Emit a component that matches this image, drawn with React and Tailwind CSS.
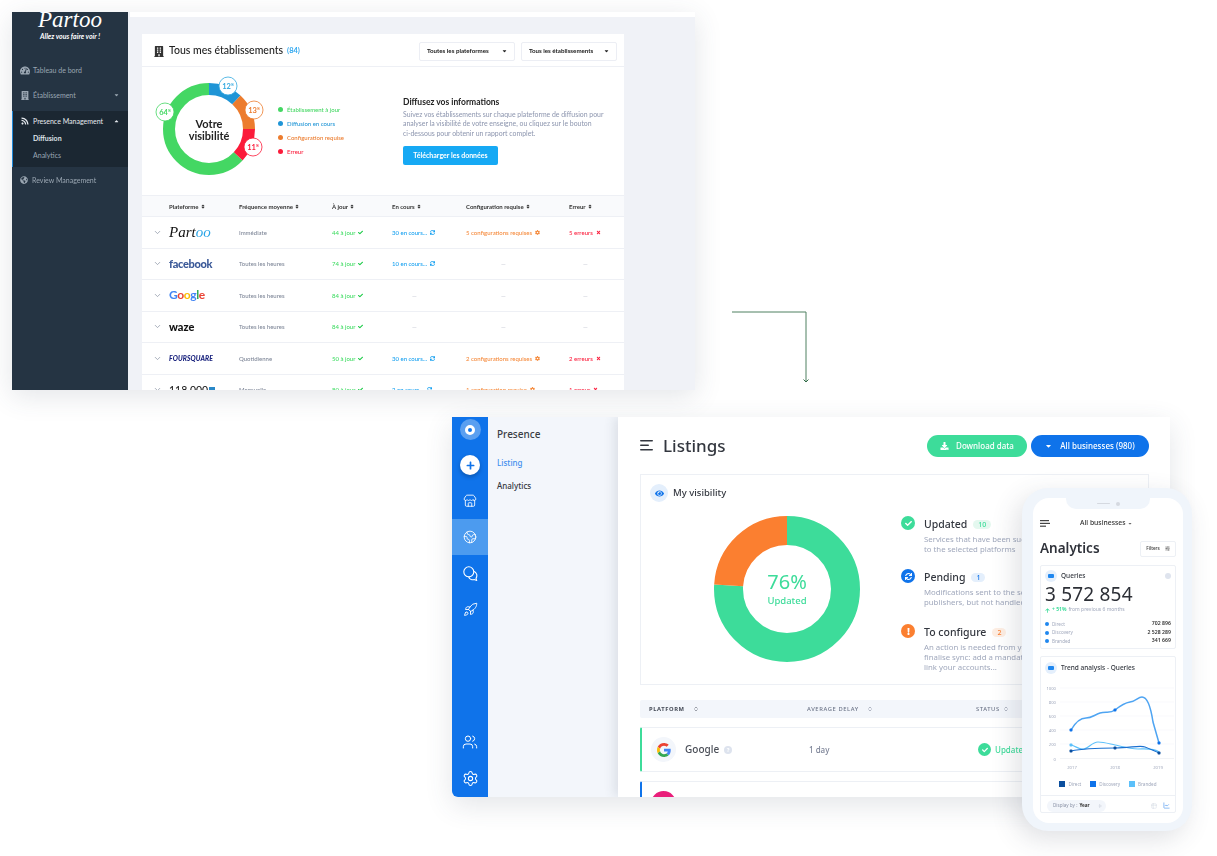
import React from "react";
import {
  FaTachometerAlt,
  FaBuilding,
  FaRss,
  FaGlobeAmericas,
  FaCaretDown,
  FaCaretUp,
  FaSort,
  FaCheck,
  FaSync,
  FaTimes,
  FaCog,
  FaEye,
  FaDownload,
  FaPlus,
  FaExclamation,
  FaQuestion,
  FaArrowUp,
} from "react-icons/fa";
import { ChevronDown, Store, Earth, Rocket, Users, Settings, ChevronsUpDown, LineChart, Table2, SlidersHorizontal } from "lucide-react";

const rows = [
  { logo: "partoo", freq: "Immédiate", ok: "44 à jour", pending: "30 en cours...", conf: "5 configurations requises", err: "5 erreurs" },
  { logo: "facebook", freq: "Toutes les heures", ok: "74 à jour", pending: "10 en cours..." },
  { logo: "google", freq: "Toutes les heures", ok: "84 à jour" },
  { logo: "waze", freq: "Toutes les heures", ok: "84 à jour" },
  { logo: "foursquare", freq: "Quotidienne", ok: "50 à jour", pending: "30 en cours...", conf: "2 configurations requises", err: "2 erreurs" },
  { logo: "118", freq: "Mensuelle", ok: "80 à jour", pending: "2 en cours...", conf: "1 configuration requise", err: "1 erreur" },
];

const Ring = ({ r, width, color, start, size }) => (
  <circle
    r={r}
    fill="none"
    stroke={color}
    strokeWidth={width}
    pathLength="100"
    strokeDasharray={`${size} ${100 - size}`}
    strokeDashoffset={-start}
    transform="rotate(-90)"
  />
);

const Badge = ({ x, y, color, label }) => (
  <g transform={`translate(${x} ${y})`}>
    <circle r="9" fill="#fff" stroke={color} strokeWidth="0.8" />
    <text textAnchor="middle" y="2.5" fontSize="7.5" fontWeight="700" fill={color}>
      {label}
      <tspan fontSize="3.5" dy="-2.5">%</tspan>
    </text>
  </g>
);

const Logo = ({ name }) => {
  if (name === "partoo")
    return (
      <span className="font-['Liberation_Serif',serif] italic text-[15px] leading-none text-[#111]">
        Part<span className="text-[#2aa5e8]">oo</span>
      </span>
    );
  if (name === "facebook") return <span className="text-[11px] font-black tracking-[-0.3px] text-[#3b5998]">facebook</span>;
  if (name === "google")
    return (
      <span className="text-[12px] font-bold tracking-[-0.4px]">
        <span className="text-[#4285f4]">G</span>
        <span className="text-[#ea4335]">o</span>
        <span className="text-[#fbbc05]">o</span>
        <span className="text-[#4285f4]">g</span>
        <span className="text-[#34a853]">l</span>
        <span className="text-[#ea4335]">e</span>
      </span>
    );
  if (name === "waze") return <span className="text-[11px] font-black text-[#111]">waze</span>;
  if (name === "foursquare") return <span className="text-[6.8px] font-black italic tracking-[0.1px] text-[#1a237e]">FOURSQUARE</span>;
  return (
    <span className="flex items-center text-[10.5px] leading-none text-[#222]">
      118 000
      <span className="ml-px h-[6px] w-[6px] bg-[#2a88c8]"></span>
    </span>
  );
};

function TopWindow() {
  return (
    <div className="absolute left-[12px] top-[12px] flex h-[378px] w-[683px] overflow-hidden bg-[#f0f2f7] font-['Lato',sans-serif] shadow-[0_6px_26px_rgba(60,70,90,0.14)] blur-[0.5px]">
      <aside className="flex w-[116px] shrink-0 flex-col bg-[#253443] text-[7px] text-[#9aa6b2]">
        <div className="h-[29px] text-center">
          <div className="-mt-[4px] font-['Liberation_Serif',serif] text-[23px] italic leading-[24px] text-white">Partoo</div>
          <div className="text-[7px] font-bold italic leading-[8px] text-white">Allez vous faire voir !</div>
        </div>
        <div className="mt-[23px] flex h-[12px] items-center gap-[3px] pl-[8px]">
          <FaTachometerAlt className="h-[9px] w-[10px]" />
          Tableau de bord
        </div>
        <div className="mt-[13px] flex h-[12px] items-center gap-[4px] pl-[9px] pr-[9px]">
          <FaBuilding className="h-[9px] w-[8px]" />
          Établissement
          <FaCaretDown className="ml-auto h-[6px] w-[5px]" />
        </div>
        <div className="mt-[10px] flex h-[56px] flex-col border-l border-[#1e88d8] bg-[#1b2732] pt-[4px]">
          <div className="flex h-[12px] items-center gap-[4px] pl-[8px] pr-[9px] text-[#e6eaef]">
            <FaRss className="h-[8px] w-[8px]" />
            Presence Management
            <FaCaretUp className="ml-auto h-[6px] w-[5px]" />
          </div>
          <div className="mt-[5px] h-[12px] pl-[20px] font-bold leading-[12px] text-[#dfe4e9]">Diffusion</div>
          <div className="mt-[5px] h-[12px] pl-[20px] leading-[12px]">Analytics</div>
        </div>
        <div className="mt-[7px] flex h-[12px] items-center gap-[4px] pl-[8px]">
          <FaGlobeAmericas className="h-[8px] w-[8px]" />
          Review Management
        </div>
      </aside>

      <div className="ml-[2px] flex min-w-0 flex-1 flex-col">
        <div className="h-[5px] shrink-0 bg-white"></div>
        <section className="ml-[12px] mt-[17px] w-[482px] bg-white">
          <header className="flex h-[33px] items-center border-b border-[#eef0f5] pl-[12px] pr-[7px] pt-[2px]">
            <FaBuilding className="h-[11px] w-[10px] text-[#333]" />
            <span className="ml-[5px] text-[10.5px] font-medium text-[#222]">Tous mes établissements</span>
            <span className="ml-[4px] text-[7.5px] font-bold text-[#33a9f0]">(84)</span>
            <button className="ml-auto flex h-[19px] w-[96px] items-center justify-between rounded-[2px] border border-[#eceef4] pl-[7px] pr-[7px] text-[6.2px] font-bold text-[#222]">
              Toutes les plateformes
              <FaCaretDown className="h-[6px] w-[5px]" />
            </button>
            <button className="ml-[6px] flex h-[19px] w-[96px] items-center justify-between rounded-[2px] border border-[#eceef4] pl-[7px] pr-[7px] text-[6.2px] font-bold text-[#222]">
              Tous les établissements
              <FaCaretDown className="h-[6px] w-[5px]" />
            </button>
          </header>

          <div className="flex h-[127px] pl-[6px]">
            <svg className="shrink-0 font-['Lato',sans-serif]" width="130" height="127" viewBox="0 0 130 127">
              <g transform="translate(61 62)">
                <Ring r="40" width="12" color="#1f95d6" start={0} size={12} />
                <Ring r="40" width="12" color="#ec7c2e" start={12} size={13} />
                <Ring r="40" width="12" color="#fb1b3a" start={25} size={12} />
                <Ring r="40" width="12" color="#44d763" start={37} size={63} />
                <text textAnchor="middle" y="-1" fontSize="11" fontWeight="700" fill="#222">Votre</text>
                <text textAnchor="middle" y="11" fontSize="11" fontWeight="700" fill="#222">visibilité</text>
              </g>
              <Badge x="17" y="45" color="#44d763" label="64" />
              <Badge x="80" y="19" color="#33a9e0" label="12" />
              <Badge x="106" y="43" color="#ec7c2e" label="13" />
              <Badge x="105" y="80" color="#fb1b3a" label="11" />
            </svg>
            <div className="w-[125px] pt-[35px] text-[6px] font-medium">
              <div className="flex h-[14px] items-center gap-[4px] text-[#44d763]"><i className="h-[5px] w-[5px] rounded-full bg-[#44d763]"></i>Établissement à jour</div>
              <div className="flex h-[14px] items-center gap-[4px] text-[#1f95d6]"><i className="h-[5px] w-[5px] rounded-full bg-[#1f95d6]"></i>Diffusion en cours</div>
              <div className="flex h-[14px] items-center gap-[4px] text-[#ec7c2e]"><i className="h-[5px] w-[5px] rounded-full bg-[#ec7c2e]"></i>Configuration requise</div>
              <div className="flex h-[15px] items-center gap-[4px] text-[#fb1b3a]"><i className="h-[5px] w-[5px] rounded-full bg-[#fb1b3a]"></i>Erreur</div>
            </div>
            <div className="pt-[29px]">
              <h3 className="text-[8.5px] font-bold leading-[12px] text-[#222]">Diffusez vos informations</h3>
              <p className="mt-[2px] whitespace-nowrap text-[6.9px] leading-[9.4px] text-[#8c95ae]">
                Suivez vos établissements sur chaque plateforme de diffusion pour
                <br />
                analyser la visibilité de votre enseigne, ou cliquez sur le bouton
                <br />
                ci-dessous pour obtenir un rapport complet.
              </p>
              <button className="mt-[8px] flex h-[19px] w-[95px] items-center justify-center rounded-[2px] bg-[#16a9f4] text-[7px] font-bold text-white">
                Télécharger les données
              </button>
            </div>
          </div>

          <div className="mt-px grid h-[22px] grid-cols-[27px_70px_93px_60px_74px_103px_55px] items-center border-y border-[#eef0f5] bg-[#f9fafc] text-[6px] font-bold text-[#333]">
            <span></span>
            {["Plateforme", "Fréquence moyenne", "À jour", "En cours", "Configuration requise", "Erreur"].map((h) => (
              <span key={h} className="flex items-center gap-[2px]">
                {h}
                <FaSort className="h-[5px] w-[4px]" />
              </span>
            ))}
          </div>

          {rows.map((r) => (
            <div key={r.logo} className="grid h-[31.5px] grid-cols-[27px_70px_93px_60px_74px_103px_55px] items-center border-b border-[#eef0f5] text-[6px] font-medium">
              <ChevronDown className="ml-[11px] h-[9px] w-[9px] text-[#8c95a6]" />
              <span className="flex items-center"><Logo name={r.logo} /></span>
              <span className="text-[#7f8798]">{r.freq}</span>
              <span className="flex items-center gap-[3px] text-[#3fdc62]">
                {r.ok}
                <FaCheck className="h-[5px] w-[5px] text-[#14c941]" />
              </span>
              {r.pending ? (
                <span className="flex items-center gap-[3px] text-[#16a0f0]">
                  {r.pending}
                  <FaSync className="h-[5px] w-[5px]" />
                </span>
              ) : (
                <span className="pl-[20px] text-[#c6cad3]">—</span>
              )}
              {r.conf ? (
                <span className="flex items-center gap-[3px] whitespace-nowrap text-[#f58a3c]">
                  {r.conf}
                  <FaCog className="h-[5px] w-[5px]" />
                </span>
              ) : (
                <span className="pl-[35px] text-[#c6cad3]">—</span>
              )}
              {r.err ? (
                <span className="flex items-center gap-[3px] whitespace-nowrap text-[#fb1b3a]">
                  {r.err}
                  <FaTimes className="h-[5px] w-[5px]" />
                </span>
              ) : (
                <span className="pl-[14px] text-[#c6cad3]">—</span>
              )}
            </div>
          ))}
        </section>
      </div>
    </div>
  );
}

const StatusItem = ({ icon, bg, title, count, badge, lines, className }) => (
  <div className={`flex gap-[9px] ${className}`}>
    <span className={`mt-[-1px] flex h-[14px] w-[14px] shrink-0 items-center justify-center rounded-full text-white ${bg}`}>{icon}</span>
    <div>
      <div className="flex h-[14px] items-center text-[10.5px] font-medium leading-none text-[#33373f]">
        {title}
        <span className={`ml-[6px] rounded-full px-[5px] py-px text-[7px] ${badge}`}>{count}</span>
      </div>
      <div className="mt-[3px] w-[200px] text-[7.8px] leading-[10px] text-[#a0a8bc]">
        {lines.map((l) => (
          <div key={l}>{l}</div>
        ))}
      </div>
    </div>
  </div>
);

function BottomWindow() {
  return (
    <div className="absolute left-[452px] top-[417px] flex h-[380px] w-[718px] overflow-hidden rounded-bl-[6px] bg-white font-['Noto_Sans',sans-serif] shadow-[0_8px_28px_rgba(60,70,90,0.14)] blur-[0.5px]">
      <nav className="flex w-[36px] shrink-0 flex-col items-center bg-[#0f73ea] text-white">
        <span className="mt-[2px] flex h-[21px] w-[21px] items-center justify-center rounded-full bg-[#5a9ff0]">
          <span className="h-[10px] w-[10px] rounded-full border-[3px] border-white bg-[#0f73ea]"></span>
        </span>
        <span className="mt-[15px] flex h-[20px] w-[20px] items-center justify-center rounded-full bg-white text-[#0f73ea] shadow-[0_2px_4px_rgba(0,0,0,0.25)]">
          <FaPlus className="h-[9px] w-[9px]" />
        </span>
        <Store className="mt-[19px] h-[14px] w-[14px]" strokeWidth={1.5} />
        <span className="mt-[11px] flex h-[36px] w-full items-center justify-center bg-[#4c9bef]">
          <Earth className="h-[14px] w-[14px]" strokeWidth={1.5} />
        </span>
        <svg className="mt-[11px] h-[15px] w-[15px]" viewBox="0 0 15 15" fill="none" stroke="currentColor" strokeWidth="1.1">
          <circle cx="5.8" cy="5.8" r="5" />
          <path d="M10.7 5.2A4.6 4.6 0 0 1 13 12.2L13.6 14.4L11.2 13.6A4.6 4.6 0 0 1 5.6 10.8" />
        </svg>
        <Rocket className="mt-[21px] h-[15px] w-[15px]" strokeWidth={1.5} />
        <Users className="mt-auto h-[16px] w-[16px]" strokeWidth={1.5} />
        <Settings className="mb-[10px] mt-[20px] h-[17px] w-[17px]" strokeWidth={1.5} />
      </nav>

      <div className="w-[130px] shrink-0 bg-[#f3f6fb] pl-[9px] pt-[10px]">
        <div className="text-[10px] font-medium leading-[14px] text-[#3a3d44]">Presence</div>
        <div className="mt-[16px] text-[8px] font-medium leading-[12px] text-[#3f8fee]">Listing</div>
        <div className="mt-[11px] text-[8px] font-medium leading-[12px] text-[#33373f]">Analytics</div>
      </div>

      <main className="min-w-0 flex-1 pl-[22px] pr-[21px] shadow-[-4px_0_10px_rgba(60,70,90,0.12)]">
        <div className="flex h-[57px] items-center">
          <svg className="h-[11px] w-[14px] text-[#33373f]" viewBox="0 0 14 11" fill="currentColor">
            <rect width="13" height="1.6" rx="0.8" />
            <rect y="4.5" width="9" height="1.6" rx="0.8" />
            <rect y="9" width="13" height="1.6" rx="0.8" />
          </svg>
          <h1 className="ml-[9px] text-[17px] font-medium leading-none text-[#33373f]">Listings</h1>
          <button className="ml-auto flex h-[22px] w-[100px] items-center justify-center gap-[7px] rounded-full bg-[#3ddc9a] text-[8px] font-medium text-white">
            <FaDownload className="h-[8px] w-[9px]" />
            Download data
          </button>
          <button className="ml-[4px] flex h-[22px] w-[118px] items-center justify-center gap-[8px] rounded-full bg-[#0f73ea] text-[8px] font-medium text-white">
            <FaCaretDown className="h-[8px] w-[7px]" />
            All businesses (980)
          </button>
        </div>

        <section className="h-[211px] border border-[#edf0f5]">
          <div className="flex h-[36px] items-center gap-[5px] pl-[9px]">
            <span className="flex h-[18px] w-[18px] items-center justify-center rounded-full bg-[#e4effc]">
              <FaEye className="h-[9px] w-[9px] text-[#0f73ea]" />
            </span>
            <span className="text-[9.5px] font-medium text-[#33373f]">My visibility</span>
          </div>
          <div className="flex">
            <svg className="ml-[72px] mt-[4px] shrink-0 font-['Noto_Sans',sans-serif]" width="148" height="148" viewBox="0 0 148 148">
              <g transform="translate(74 74)">
                <Ring r="58.5" width="29" color="#3ddc9a" start={0} size={76} />
                <Ring r="58.5" width="29" color="#fb7f30" start={76} size={24} />
                <text textAnchor="middle" y="0" fontSize="20" fill="#3ddc9a">76%</text>
                <text textAnchor="middle" y="15" fontSize="9.5" fontWeight="500" fill="#3ddc9a">Updated</text>
              </g>
            </svg>
            <div className="ml-[40px] pt-[6px]">
              <StatusItem
                icon={<FaCheck className="h-[7px] w-[7px]" />}
                bg="bg-[#3ddc9a]"
                title="Updated"
                count="10"
                badge="bg-[#e4f8ef] text-[#3ddc9a]"
                lines={["Services that have been successfully", "to the selected platforms"]}
              />
              <StatusItem
                className="mt-[16px]"
                icon={<FaSync className="h-[7px] w-[7px]" />}
                bg="bg-[#0f73ea]"
                title="Pending"
                count="1"
                badge="bg-[#e4effc] text-[#0f73ea]"
                lines={["Modifications sent to the selected", "publishers, but not handled yet"]}
              />
              <StatusItem
                className="mt-[18px]"
                icon={<FaExclamation className="h-[7px] w-[7px]" />}
                bg="bg-[#fb7f30]"
                title="To configure"
                count="2"
                badge="bg-[#feeee3] text-[#fb7f30]"
                lines={["An action is needed from you to", "finalise sync: add a mandatory field,", "link your accounts..."]}
              />
            </div>
          </div>
        </section>

        <div className="mt-[15px] grid h-[18px] grid-cols-[158px_169px_1fr] items-center rounded-[2px] bg-[#f3f6fb] pl-[9px] text-[5.8px] font-medium tracking-[0.6px] text-[#6d7588]">
          <span className="flex items-center gap-[8px] font-bold text-[#444a56]">PLATFORM<ChevronsUpDown className="h-[6px] w-[6px]" /></span>
          <span className="flex items-center gap-[8px]">AVERAGE DELAY<ChevronsUpDown className="h-[6px] w-[6px]" /></span>
          <span className="flex items-center gap-[3px]">STATUS<ChevronsUpDown className="h-[6px] w-[6px]" /></span>
        </div>

        <div className="mt-[9px] grid h-[45px] grid-cols-[158px_169px_1fr] items-center rounded-[2px] border-y border-r border-l-[2px] border-y-[#edf0f5] border-r-[#edf0f5] border-l-[#3ddc9a] pl-[9px]">
          <span className="flex items-center">
            <span className="flex h-[25px] w-[25px] items-center justify-center rounded-full bg-[#f3f6fb]">
              <svg className="h-[14px] w-[14px]" viewBox="0 0 48 48">
                <path fill="#EA4335" d="M24 9.5c3.5 0 6.7 1.2 9.2 3.6l6.9-6.9C35.9 2.4 30.5 0 24 0 14.6 0 6.5 5.4 2.6 13.2l8 6.2C12.5 13.7 17.8 9.5 24 9.5z" />
                <path fill="#4285F4" d="M47 24.5c0-1.6-.1-3.1-.4-4.5H24v9h13c-.6 3-2.2 5.5-4.8 7.2l7.7 6C44.400 38.100 47 31.900 47 24.500z" />
                <path fill="#FBBC05" d="M10.500 28.600A14.500 14.500 0 0 1 9.700 24c0-1.600.3-3.100.8-4.600l-8-6.200A24 24 0 0 0 0 24c0 3.900.9 7.500 2.600 10.800l7.900-6.200z" />
                <path fill="#34A853" d="M24 48c6.500 0 11.900-2.100 15.900-5.800l-7.700-6c-2.200 1.500-4.900 2.300-8.200 2.300-6.200 0-11.500-4.200-13.400-9.900l-8 6.200C6.500 42.600 14.600 48 24 48z" />
              </svg>
            </span>
            <span className="ml-[9px] text-[10px] font-medium text-[#4b4f58]">Google</span>
            <span className="ml-[5px] flex h-[8px] w-[8px] items-center justify-center rounded-full bg-[#dde3ee] text-white">
              <FaQuestion className="h-[4px] w-[4px]" />
            </span>
          </span>
          <span className="text-[8px] font-medium text-[#7c8397]">1 day</span>
          <span className="flex items-center gap-[4px] text-[8px] font-medium text-[#3ddc9a]">
            <span className="flex h-[13px] w-[13px] items-center justify-center rounded-full bg-[#3ddc9a] text-white">
              <FaCheck className="h-[6px] w-[6px]" />
            </span>
            Updated
          </span>
        </div>

        <div className="mt-[9px] h-[45px] rounded-[2px] border-y border-r border-l-[2px] border-y-[#edf0f5] border-r-[#edf0f5] border-l-[#0f73ea] pl-[9px] pt-[9px]">
          <span className="block h-[25px] w-[25px] rounded-full bg-[#e91e7a]"></span>
        </div>
      </main>
    </div>
  );
}

function Phone() {
  return (
    <div className="absolute left-[1022px] top-[488px] h-[343px] w-[170px] rounded-[26px] bg-[#f0f5fb] pb-[8px] pl-[11px] pr-[9px] pt-[10px] font-['Noto_Sans',sans-serif] shadow-[-6px_8px_26px_rgba(60,70,90,0.16)] blur-[0.5px]">
      <div className="absolute left-[44px] top-[10px] flex h-[11px] w-[84px] items-center justify-center gap-[6px] rounded-b-[10px] bg-[#f0f5fb]">
        <span className="h-[1.5px] w-[13px] rounded-full bg-[#d5d9e0]"></span>
        <span className="h-[4px] w-[4px] rounded-full bg-[#d5d9e0]"></span>
      </div>
      <div className="h-full rounded-[16px] bg-white px-[7px] pt-[18px]">
        <div className="flex h-[14px] items-center">
          <svg className="h-[7px] w-[10px] text-[#444]" viewBox="0 0 10 7" fill="currentColor">
            <rect width="9" height="1.2" />
            <rect y="2.8" width="10" height="1.2" />
            <rect y="5.6" width="6" height="1.2" />
          </svg>
          <span className="ml-[30px] flex items-center gap-[3px] text-[6.8px] font-medium text-[#333]">
            All businesses
            <FaCaretDown className="h-[5px] w-[4px] text-[#666]" />
          </span>
        </div>
        <div className="mt-[10px] flex h-[17px] items-center justify-between">
          <span className="text-[13.5px] font-semibold text-[#2f323a]">Analytics</span>
          <span className="flex h-[16px] w-[36px] items-center justify-center gap-[5px] rounded-[2px] border border-[#edf0f5] text-[4.6px] font-medium text-[#333]">
            Filters
            <SlidersHorizontal className="h-[5px] w-[5px]" />
          </span>
        </div>

        <section className="mt-[8px] h-[84px] rounded-[2px] border border-[#edf0f5] px-[4px] pt-[4px]">
          <div className="flex h-[12px] items-center gap-[4px]">
            <span className="flex h-[12px] w-[12px] items-center justify-center rounded-full bg-[#e4effc]">
              <span className="h-[4px] w-[6px] rounded-[1px] bg-[#1f87ef]"></span>
            </span>
            <span className="text-[6.5px] font-medium text-[#33373f]">Queries</span>
            <span className="ml-auto h-[6px] w-[6px] rounded-full bg-[#dfe4ee]"></span>
          </div>
          <div className="text-[19px] leading-[24px] tracking-[0.2px] text-[#2c2f36]">3 572 854</div>
          <div className="flex h-[8px] items-center gap-[2px] text-[5px] text-[#a0a8bc]">
            <FaArrowUp className="h-[5px] w-[5px] text-[#3ddc9a]" />
            <span className="font-bold text-[#3ddc9a]">+ 51%</span> from previous 6 months
          </div>
          <div className="mt-[6px] text-[4.6px] text-[#a0a8bc]">
            {[
              ["Direct", "702 896"],
              ["Discovery", "2 528 289"],
              ["Branded", "341 669"],
            ].map(([label, value]) => (
              <div key={label} className="flex h-[8.5px] items-center gap-[3px]">
                <i className="h-[4px] w-[4px] rounded-full bg-[#1f87ef]"></i>
                {label}
                <span className="ml-auto text-[5.2px] font-semibold text-[#333]">{value}</span>
              </div>
            ))}
          </div>
        </section>

        <section className="mt-[7px] h-[157px] rounded-[2px] border border-[#edf0f5] pt-[4px]">
          <div className="flex h-[14px] items-center gap-[4px] px-[4px]">
            <span className="flex h-[12px] w-[12px] items-center justify-center rounded-full bg-[#e4effc]">
              <span className="h-[4px] w-[6px] rounded-[1px] bg-[#1f87ef]"></span>
            </span>
            <span className="text-[6.5px] font-medium text-[#33373f]">Trend analysis - Queries</span>
          </div>
          <svg className="-ml-px mt-[7px] block font-['Noto_Sans',sans-serif]" width="134" height="92" viewBox="0 0 134 92">
            {[6, 20, 34, 48, 62].map((y) => (
              <line key={y} x1="20" x2="134" y1={y} y2={y} stroke="#f6f7fa" strokeWidth="0.7" />
            ))}
            <line x1="20" x2="134" y1="76.5" y2="76.5" stroke="#eceff4" strokeWidth="0.7" />
            {[["1000", 7.5], ["800", 21.5], ["600", 35.5], ["400", 49.5], ["200", 63.5], ["0", 78.5]].map(([t, y]) => (
              <text key={t} x="16" y={y} textAnchor="end" fontSize="4.2" fill="#a0a8bc">{t}</text>
            ))}
            {[["2017", 32], ["2018", 75], ["2019", 118]].map(([t, x]) => (
              <text key={t} x={x} y="87" textAnchor="middle" fontSize="4.2" fill="#a0a8bc">{t}</text>
            ))}
            <path d="M31 63C36 64 39 68 44 67S52 60 58 60S70 62 75 63S90 67 98 67S114 66 119 70" fill="none" stroke="#5cc0fa" strokeWidth="1.2" />
            <path d="M31 69C45 66 60 66 75 66S100 63 105 65S115 69 119 71" fill="none" stroke="#1a6fd0" strokeWidth="1.2" />
            <path d="M31 48C35 41 40 36 46 36S54 33 60 31S70 32 75 28S84 21 90 20S98 15 102 15S110 20 113 40L119 61" fill="none" stroke="#4ea4f2" strokeWidth="1.5" />
            <rect x="29.5" y="46.5" width="3" height="3" rx="1" fill="#0f73ea" />
            <rect x="73.5" y="26.5" width="3" height="3" rx="1" fill="#0f73ea" />
            <rect x="117.5" y="59.5" width="3" height="3" rx="1" fill="#0f73ea" />
            <rect x="29.5" y="61.5" width="3" height="3" rx="1" fill="#5cc0fa" />
            <rect x="29.5" y="67.5" width="3" height="3" rx="1" fill="#0b4f9e" />
            <rect x="73.5" y="64.5" width="3" height="3" rx="1" fill="#0b4f9e" />
            <rect x="117.5" y="69.5" width="3" height="3" rx="1" fill="#0b4f9e" />
          </svg>
          <div className="mt-[6px] flex h-[8px] items-center justify-center gap-[9px] text-[4.6px] text-[#a0a8bc]">
            <span className="flex items-center gap-[3px]"><i className="h-[6px] w-[6px] bg-[#0b4f9e]"></i>Direct</span>
            <span className="flex items-center gap-[3px]"><i className="h-[6px] w-[6px] bg-[#0f73ea]"></i>Discovery</span>
            <span className="flex items-center gap-[3px]"><i className="h-[6px] w-[6px] bg-[#5cc0fa]"></i>Branded</span>
          </div>
          <div className="mt-[7px] flex h-[20px] items-center border-t border-[#edf0f5] pl-[6px] pr-[5px]">
            <span className="flex h-[12px] w-[59px] items-center gap-[2px] rounded-full bg-[#f3f6fb] pl-[6px] text-[4.6px] text-[#8a92a6]">
              Display by :<b className="text-[#333]">Year</b>
              <ChevronsUpDown className="ml-[6px] h-[4px] w-[4px]" />
            </span>
            <Table2 className="ml-auto h-[6px] w-[6px] text-[#d5dae4]" />
            <LineChart className="ml-[6px] h-[7px] w-[7px] text-[#3f8fee]" />
          </div>
        </section>
      </div>
    </div>
  );
}

export default function App() {
  return (
    <div className="relative h-[856px] w-[1217px] overflow-hidden bg-white">
      <TopWindow />
      <svg className="absolute left-[730px] top-[310px]" width="80" height="75" viewBox="0 0 80 75" fill="none">
        <path d="M2 2H76V71" stroke="#4f8060" strokeWidth="1" />
        <path d="M73.5 69.500L76 72L78.500 69.500" stroke="#2f6b45" strokeWidth="1" />
      </svg>
      <BottomWindow />
      <Phone />
    </div>
  );
}
